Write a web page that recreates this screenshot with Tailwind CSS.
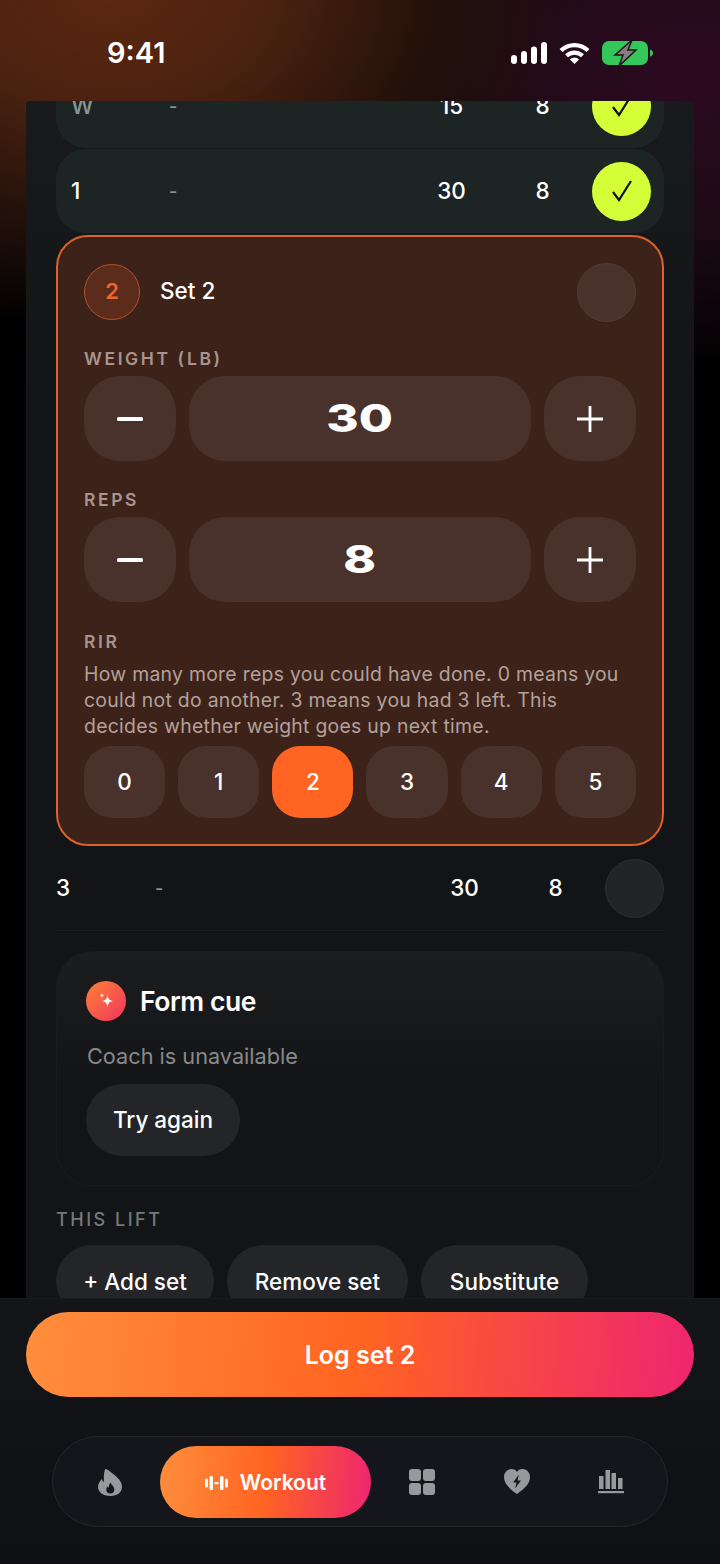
<!DOCTYPE html>
<html lang="en">
<head>
<meta charset="utf-8">
<script src="https://cdn.jsdelivr.net/npm/@tailwindcss/browser@4"></script>
<title>Workout</title>
</head>
<body class="bg-black">
<div class="relative w-[720px] h-[1564px] overflow-hidden flex flex-col text-white [font-family:Inter,sans-serif] bg-[radial-gradient(ellipse_470px_340px_at_110px_-10px,#5e2710_0%,#4a2210_35%,#22100a_70%,transparent_100%),radial-gradient(ellipse_420px_300px_at_690px_70px,#2e0a22_0%,#1c0a14_55%,transparent_100%),linear-gradient(180deg,#140a10_0px,#000000_300px)]">

  <div class="h-[101px] shrink-0 flex items-start justify-between pt-[36px] pl-[107px] pr-[67px]">
    <div class="text-[29px] leading-[34px] font-semibold">9:41</div>
    <div class="flex items-center gap-[12px] h-[34px]">
      <svg width="36" height="24" viewBox="0 0 36 24" fill="#fff"><rect x="0" y="14" width="6" height="9" rx="3"/><rect x="10" y="10" width="6" height="13" rx="3"/><rect x="20" y="5.500" width="6" height="17.500" rx="3"/><rect x="30" y="1" width="6" height="22" rx="3"/></svg>
      <svg width="31" height="24" viewBox="0 0 31 24" fill="none" stroke="#fff" stroke-width="4.200"><path d="M2 9.500a19.500 19.500 0 0 1 27 0"/><path d="M7.500 14.800a11.500 11.500 0 0 1 16 0"/><path d="M15.500 23l-4.600-4.600a6.500 6.500 0 0 1 9.200 0z" fill="#fff" stroke="none"/></svg>
      <svg width="51" height="26" viewBox="0 0 51 26"><rect x="0" y="1" width="46" height="24" rx="7" fill="#34c759"/><path d="M48 9.500c2 .5 3 2 3 3.500s-1 3-3 3.500z" fill="#34c759"/><path d="M30 0 13 15h8l-4 11 17-16h-8z" fill="#857d80" stroke="#1a1216" stroke-width="1.500"/></svg>
    </div>
  </div>

  <main class="mx-[26px] flex-1 overflow-hidden bg-[linear-gradient(180deg,#181a1b_0px,#131417_300px)] px-[30px] rounded-t-[3px]">
    <div class="-mt-[37px]">
      <div class="grid grid-cols-[88px_1fr_83px_79px_59px] gap-x-[10px] items-center h-[84px] pl-[15px] pr-[13px] rounded-[30px] bg-[#1c2523] text-[22.500px] font-medium">
        <div class="text-[#8d9594]">W</div><div class="text-[#8d9594] text-[18px]">-</div><div class="text-center">15</div><div class="text-center">8</div>
        <div class="w-[59px] h-[59px] rounded-full bg-[#d4ff38] flex items-center justify-center"><svg width="24" height="24" viewBox="0 0 24 24" fill="none" stroke="#111" stroke-width="2.200"><path d="M3 13l6 8L21 2"/></svg></div>
      </div>
      <div class="mt-px grid grid-cols-[88px_1fr_83px_79px_59px] gap-x-[10px] items-center h-[84px] pl-[15px] pr-[13px] rounded-[30px] bg-[#1c2523] text-[22.500px] font-medium">
        <div>1</div><div class="text-[#8d9594] text-[18px]">-</div><div class="text-center">30</div><div class="text-center">8</div>
        <div class="w-[59px] h-[59px] rounded-full bg-[#d4ff38] flex items-center justify-center"><svg width="24" height="24" viewBox="0 0 24 24" fill="none" stroke="#111" stroke-width="2.200"><path d="M3 13l6 8L21 2"/></svg></div>
      </div>

      <section class="mt-[2px] h-[611px] rounded-[32px] border-2 border-[#dd622c] bg-[#3d2219] px-[26px] pt-[25px]">
        <div class="flex items-center h-[60px]">
          <div class="-mt-[1px] w-[56px] h-[56px] rounded-full bg-[#5b2c1b] border border-[#b4522a] flex items-center justify-center text-[22px] font-semibold text-[#f0652a]">2</div>
          <div class="-mt-[2px] ml-[20px] text-[22.500px] font-medium">Set 2</div>
          <div class="ml-auto w-[59px] h-[59px] rounded-full bg-[#4a322c] border border-[#553b34]"></div>
        </div>

        <div class="mt-[25px] h-[24px] leading-[24px] text-[17.500px] font-semibold tracking-[2.600px] text-[#a8958f]">WEIGHT (LB)</div>
        <div class="mt-[5px] flex gap-[13px] h-[85px]">
          <div class="w-[92px] rounded-[36px] bg-[#4a322c] flex items-center justify-center"><svg width="26" height="26" viewBox="0 0 26 26"><rect x="0" y="11" width="26" height="4" rx="1.500" fill="#fff"/></svg></div>
          <div class="flex-1 rounded-[36px] bg-[#4a322c] flex items-center justify-center"><span class="text-[38px] font-extrabold scale-x-[1.3] inline-block">30</span></div>
          <div class="w-[92px] rounded-[36px] bg-[#4a322c] flex items-center justify-center"><svg width="26" height="26" viewBox="0 0 26 26"><path d="M0 13h26M13 0v26" stroke="#fff" stroke-width="2.800"/></svg></div>
        </div>

        <div class="mt-[27px] h-[24px] leading-[24px] text-[17.500px] font-semibold tracking-[2.600px] text-[#a8958f]">REPS</div>
        <div class="mt-[5px] flex gap-[13px] h-[85px]">
          <div class="w-[92px] rounded-[36px] bg-[#4a322c] flex items-center justify-center"><svg width="26" height="26" viewBox="0 0 26 26"><rect x="0" y="11" width="26" height="4" rx="1.500" fill="#fff"/></svg></div>
          <div class="flex-1 rounded-[36px] bg-[#4a322c] flex items-center justify-center"><span class="text-[38px] font-extrabold scale-x-[1.3] inline-block">8</span></div>
          <div class="w-[92px] rounded-[36px] bg-[#4a322c] flex items-center justify-center"><svg width="26" height="26" viewBox="0 0 26 26"><path d="M0 13h26M13 0v26" stroke="#fff" stroke-width="2.800"/></svg></div>
        </div>

        <div class="mt-[28px] h-[24px] leading-[24px] text-[17.500px] font-semibold tracking-[2.600px] text-[#a8958f]">RIR</div>
        <p class="mt-[7px] text-[19.400px] leading-[26px] tracking-[0.280px] text-[#b3a19b] whitespace-nowrap">How many more reps you could have done. 0 means you<br>could not do another. 3 means you had 3 left. This<br>decides whether weight goes up next time.</p>
        <div class="mt-[7px] grid grid-cols-6 gap-[13px] h-[72px] text-[22.500px] font-medium">
          <div class="rounded-[28px] bg-[#4a322c] flex items-center justify-center">0</div>
          <div class="rounded-[28px] bg-[#4a322c] flex items-center justify-center">1</div>
          <div class="rounded-[28px] bg-[#ff6422] flex items-center justify-center">2</div>
          <div class="rounded-[28px] bg-[#4a322c] flex items-center justify-center">3</div>
          <div class="rounded-[28px] bg-[#4a322c] flex items-center justify-center">4</div>
          <div class="rounded-[28px] bg-[#4a322c] flex items-center justify-center">5</div>
        </div>
      </section>

      <div class="grid grid-cols-[89px_1fr_83px_79px_59px] gap-x-[10px] items-center h-[85px] border-b border-[#1c1d20] text-[22.500px] font-medium">
        <div>3</div><div class="text-[#8d9594] text-[18px]">-</div><div class="text-center">30</div><div class="text-center">8</div>
        <div class="w-[59px] h-[59px] rounded-full bg-[#232427] border border-[#2d2e31]"></div>
      </div>

      <section class="mt-[20px] h-[235px] rounded-[36px] border border-[#1a1b1e] bg-[linear-gradient(180deg,#1c1d1f_0%,#131416_60%)] pl-[29px] pt-[29px]">
        <div class="flex items-center gap-[14px] h-[40px]">
          <div class="w-[40px] h-[40px] rounded-full bg-[linear-gradient(135deg,#ff8232,#ef3560)] flex items-center justify-center">
            <svg width="24" height="24" viewBox="0 0 24 24" fill="#fff"><path d="M13.500 6c.6 4 1.900 5.400 5.500 6-3.600.6-4.900 2-5.500 6-.6-4-1.900-5.400-5.500-6 3.600-.6 4.900-2 5.500-6z"/><path d="M8 4c.3 1.600.8 2.200 2.300 2.500C8.800 6.800 8.300 7.400 8 9c-.3-1.600-.8-2.200-2.300-2.500C7.200 6.200 7.700 5.600 8 4z"/></svg>
          </div>
          <div class="pt-[1px] text-[26.500px] font-semibold tracking-[-0.450px]">Form cue</div>
        </div>
        <div class="mt-[20px] ml-[1px] h-[30px] leading-[30px] text-[21.700px] text-[#88898c]">Coach is unavailable</div>
        <div class="mt-[13px] w-[154px] h-[72px] rounded-full bg-[#242528] flex items-center justify-center text-[22.500px] font-medium">Try again</div>
      </section>

      <div class="mt-[22px] h-[24px] leading-[24px] text-[18px] font-medium tracking-[2.500px] text-[#77787b]">THIS LIFT</div>
      <div class="mt-[13px] flex gap-[13px] text-[22.500px] font-medium">
        <div class="w-[158px] h-[72px] pt-[2px] rounded-full bg-[#242528] flex items-center justify-center">+ Add set</div>
        <div class="w-[181px] h-[72px] pt-[2px] rounded-full bg-[#242528] flex items-center justify-center">Remove set</div>
        <div class="w-[167px] h-[72px] pt-[2px] rounded-full bg-[#242528] flex items-center justify-center">Substitute</div>
      </div>
    </div>
  </main>

  <footer class="absolute left-0 right-0 bottom-0 h-[266px] bg-[linear-gradient(180deg,#141519_0%,#0f1013_100%)] border-t border-[#191a1e] px-[26px] pt-[13px]">
    <div class="h-[85px] pt-[2px] rounded-full bg-[linear-gradient(95deg,#ff8e3c_0%,#ff6422_50%,#ee2570_100%)] flex items-center justify-center text-[25px] font-semibold">Log set 2</div>
    <nav class="mt-[39px] mx-[26px] w-[616px] h-[91px] rounded-full border border-[#26272b] bg-[#15161b] flex items-center pl-[7px]">
      <div class="w-[100px] flex items-center justify-center pt-[1px]">
        <svg width="24" height="27" viewBox="0 0 24 27"><path d="M7 0c2 0 4.500 2 7.500 4.500C19 8 24 12 24 18c0 5-4.500 9-11.500 9C5 27 0 23 0 18c0-3.500 2-6 4-8 .3 1.500 1 2.500 2 3C5.500 9 6 4 7 0z" fill="#98999d"/><path d="M12.500 13.500c.5 2 3.800 3.800 3.800 7a4 4 0 0 1-8 0c0-1.500.7-2.500 1.500-3.200.2.800.6 1.200 1.200 1.400-.2-1.700.2-3.900 1.500-5.200z" fill="#15161b"/></svg>
      </div>
      <div class="w-[211px] h-[72px] pt-[2px] rounded-full bg-[linear-gradient(95deg,#ff8e3c_0%,#ff6422_50%,#ee2570_100%)] flex items-center justify-center gap-[12px]">
        <svg width="23" height="16" viewBox="0 0 23 16" fill="#fff"><rect x="0" y="3.500" width="3" height="9" rx="1.500"/><rect x="4.500" y="1" width="3.500" height="14" rx="1.500"/><rect x="9.500" y="7" width="4" height="2.200"/><rect x="15" y="1" width="3.500" height="14" rx="1.500"/><rect x="20" y="3.500" width="3" height="9" rx="1.500"/></svg>
        <span class="text-[21px] font-semibold">Workout</span>
      </div>
      <div class="ml-[4px] w-[94.500px] flex items-center justify-center">
        <svg width="26" height="26" viewBox="0 0 26 26" fill="#98999d"><rect x="0" y="0" width="12" height="12" rx="3"/><rect x="14" y="0" width="12" height="12" rx="3"/><rect x="0" y="14" width="12" height="12" rx="3"/><rect x="14" y="14" width="12" height="12" rx="3"/></svg>
      </div>
      <div class="w-[94.500px] flex items-center justify-center">
        <svg width="26" height="25" viewBox="0 0 26 25"><path d="M13 25C6 20 0 15 0 8 0 3.500 3.500 0 7.500 0 10 0 12 1.300 13 3c1-1.700 3-3 5.500-3C22.500 0 26 3.500 26 8c0 7-6 12-13 17z" fill="#98999d"/><path d="M15 5.500 9 13.500h3.500L11 19.500l6-8h-3.500z" fill="#15161b"/></svg>
      </div>
      <div class="w-[94.500px] flex items-center justify-center">
        <svg width="26" height="24" viewBox="0 0 26 24" fill="#98999d"><rect x="1" y="6" width="4.500" height="13"/><rect x="7.500" y="0" width="4.500" height="19"/><rect x="13.500" y="3" width="4.500" height="16"/><rect x="20" y="8" width="4.500" height="11"/><rect x="0" y="21" width="26" height="2.200"/></svg>
      </div>
    </nav>
  </footer>
</div>
</body>
</html>
